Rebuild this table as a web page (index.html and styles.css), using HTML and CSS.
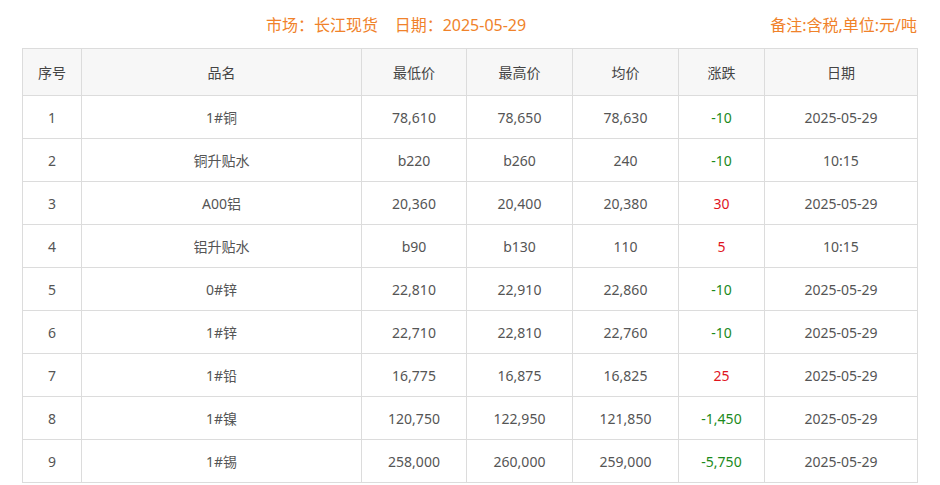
FILE: index.html
```html
<!DOCTYPE html>
<html lang="zh-CN">
<head>
<meta charset="utf-8">
<title>长江现货</title>
<link rel="stylesheet" href="styles.css">
</head>
<body>
<div class="wrap">
  <div class="top">
    <div class="title">市场：长江现货&nbsp;&nbsp;&nbsp;&nbsp;日期：2025-05-29</div>
    <div class="note">备注:含税,单位:元/吨</div>
  </div>
  <table class="grid">
    <colgroup>
      <col class="c1"><col class="c2"><col class="c3"><col class="c4"><col class="c5"><col class="c6"><col class="c7">
    </colgroup>
    <thead>
      <tr><th>序号</th><th>品名</th><th>最低价</th><th>最高价</th><th>均价</th><th>涨跌</th><th>日期</th></tr>
    </thead>
    <tbody>
      <tr><td>1</td><td>1#铜</td><td>78,610</td><td>78,650</td><td>78,630</td><td class="down">-10</td><td>2025-05-29</td></tr>
      <tr><td>2</td><td>铜升贴水</td><td>b220</td><td>b260</td><td>240</td><td class="down">-10</td><td>10:15</td></tr>
      <tr><td>3</td><td>A00铝</td><td>20,360</td><td>20,400</td><td>20,380</td><td class="up">30</td><td>2025-05-29</td></tr>
      <tr><td>4</td><td>铝升贴水</td><td>b90</td><td>b130</td><td>110</td><td class="up">5</td><td>10:15</td></tr>
      <tr><td>5</td><td>0#锌</td><td>22,810</td><td>22,910</td><td>22,860</td><td class="down">-10</td><td>2025-05-29</td></tr>
      <tr><td>6</td><td>1#锌</td><td>22,710</td><td>22,810</td><td>22,760</td><td class="down">-10</td><td>2025-05-29</td></tr>
      <tr><td>7</td><td>1#铅</td><td>16,775</td><td>16,875</td><td>16,825</td><td class="up">25</td><td>2025-05-29</td></tr>
      <tr><td>8</td><td>1#镍</td><td>120,750</td><td>122,950</td><td>121,850</td><td class="down">-1,450</td><td>2025-05-29</td></tr>
      <tr><td>9</td><td>1#锡</td><td>258,000</td><td>260,000</td><td>259,000</td><td class="down">-5,750</td><td>2025-05-29</td></tr>
    </tbody>
  </table>
</div>
</body>
</html>
```
FILE: styles.css
```css
html, body {
  margin: 0;
  padding: 0;
  background: #fff;
}
body {
  font-family: "Noto Sans", "Noto Sans CJK SC", sans-serif;
  color: #555;
  font-size: 14px;
}
.wrap {
  width: 895px;
  margin-left: 22px;
}
.top {
  display: flex;
  align-items: center;
  height: 48px;
  color: #f0822a;
  font-size: 16px;
  padding-bottom: 0;
}
.title {
  flex: 1;
  text-align: center;
}
.note {
  text-align: right;
}
.grid {
  width: 895px;
  border-collapse: collapse;
  table-layout: fixed;
}
.c1 { width: 59px; }
.c2 { width: 280px; }
.c3 { width: 105px; }
.c4 { width: 106px; }
.c5 { width: 106px; }
.c6 { width: 86px; }
.c7 { width: 153px; }
.grid th, .grid td {
  border: 1px solid #dcdcdc;
  text-align: center;
  padding: 0;
  font-weight: normal;
}
.grid th {
  height: 46px;
  background: #f7f7f7;
  color: #444;
}
.grid td {
  height: 42px;
}
.grid td.down { color: #1b8a1b; }
.grid td.up { color: #e0141e; }
```
